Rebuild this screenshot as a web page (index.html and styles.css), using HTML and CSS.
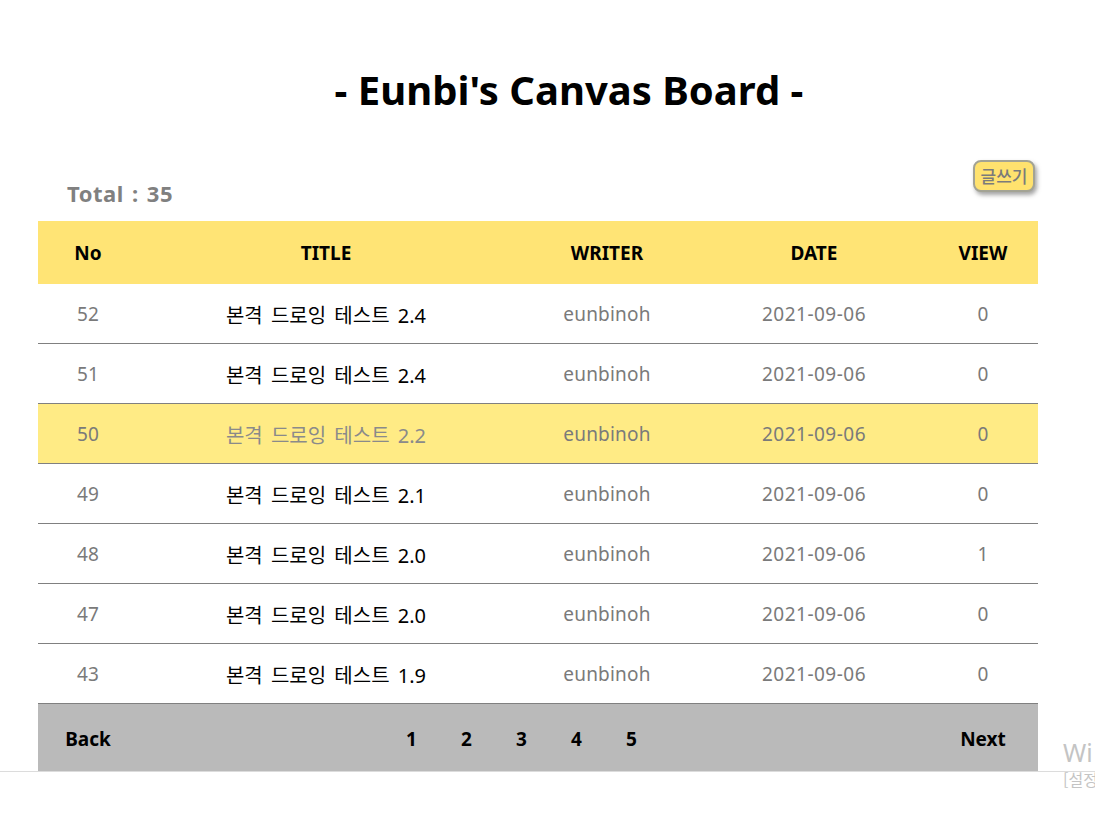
FILE: index.html
```html
<!DOCTYPE html>
<html lang="ko">
<head>
<meta charset="utf-8">
<title>Eunbi's Canvas Board</title>
<link rel="stylesheet" href="styles.css">
</head>
<body>
<div class="page">
  <h1 class="title">- Eunbi's Canvas Board -</h1>
  <div class="toolbar">
    <div class="total">Total : 35</div>
    <button class="write-btn">글쓰기</button>
  </div>
  <table class="board">
    <colgroup>
      <col class="c-no"><col class="c-title"><col class="c-writer"><col class="c-date"><col class="c-view">
    </colgroup>
    <thead>
      <tr><th>No</th><th>TITLE</th><th>WRITER</th><th>DATE</th><th>VIEW</th></tr>
    </thead>
    <tbody>
      <tr><td>52</td><td class="t">본격 드로잉 테스트 2.4</td><td>eunbinoh</td><td class="d">2021-09-06</td><td>0</td></tr>
      <tr><td>51</td><td class="t">본격 드로잉 테스트 2.4</td><td>eunbinoh</td><td class="d">2021-09-06</td><td>0</td></tr>
      <tr class="hover"><td>50</td><td class="t">본격 드로잉 테스트 2.2</td><td>eunbinoh</td><td class="d">2021-09-06</td><td>0</td></tr>
      <tr><td>49</td><td class="t">본격 드로잉 테스트 2.1</td><td>eunbinoh</td><td class="d">2021-09-06</td><td>0</td></tr>
      <tr><td>48</td><td class="t">본격 드로잉 테스트 2.0</td><td>eunbinoh</td><td class="d">2021-09-06</td><td>1</td></tr>
      <tr><td>47</td><td class="t">본격 드로잉 테스트 2.0</td><td>eunbinoh</td><td class="d">2021-09-06</td><td>0</td></tr>
      <tr class="last"><td>43</td><td class="t">본격 드로잉 테스트 1.9</td><td>eunbinoh</td><td class="d">2021-09-06</td><td>0</td></tr>
    </tbody>
  </table>
  <div class="pager">
    <span class="back">Back</span>
    <div class="pages"><span>1</span><span>2</span><span>3</span><span>4</span><span>5</span></div>
    <span class="next">Next</span>
  </div>
</div>
<div class="bottom-line"></div>
<div class="watermark"><div class="wm-big">Wi</div><div class="wm-small">[설정</div></div>
</body>
</html>
```
FILE: styles.css
```css
html, body {
  margin: 0;
  padding: 0;
  background: #ffffff;
}
body {
  font-family: "Noto Sans", "Noto Sans CJK KR", sans-serif;
  position: relative;
  min-height: 835px;
  overflow: hidden;
}
.page {
  width: 1000px;
  margin-left: 38px;
}
.title {
  margin: 0;
  padding: 62px 0 0 62px;
  height: 56px;
  text-align: center;
  font-size: 40px;
  line-height: 56px;
  font-weight: 700;
  color: #000;
}
.toolbar {
  display: flex;
  justify-content: space-between;
  align-items: flex-start;
  height: 103px;
  box-sizing: border-box;
  padding-top: 42px;
}
.total {
  margin: 18px 0 0 29px;
  font-size: 22px;
  line-height: 30px;
  font-weight: 700;
  color: #808080;
  letter-spacing: 0.5px;
  word-spacing: 2px;
}
.write-btn {
  margin-right: 3px;
  width: 62px;
  height: 32px;
  padding: 0;
  border: 2px solid #a3a394;
  border-radius: 8px;
  background: #ffe26e;
  color: #7b7b7b;
  font-family: "Noto Sans CJK KR", sans-serif;
  font-size: 17px;
  font-weight: 500;
  line-height: 26px;
  box-shadow: 2px 3px 4px rgba(90, 90, 90, 0.55);
}
.board {
  width: 1000px;
  border-collapse: collapse;
  table-layout: fixed;
}
.c-no { width: 100px; }
.c-title { width: 376px; }
.c-writer { width: 186px; }
.c-date { width: 228px; }
.c-view { width: 110px; }
.board th {
  height: 63px;
  padding: 0;
  background: #ffe475;
  font-size: 19px;
  font-weight: 700;
  color: #000;
  text-align: center;
}
.board td {
  height: 58px;
  padding: 1px 0 0;
  border-bottom: 1px solid #808080;
  font-size: 19px;
  color: #7a7a7a;
  text-align: center;
  letter-spacing: 0.2px;
}
.board td.d {
  letter-spacing: 0.5px;
}
.board td.t {
  color: #000;
  font-size: 20px;
  word-spacing: 3px;
  letter-spacing: 0;
}
.board tr.hover td {
  background: #ffeb85;
}
.board tr.hover td.t {
  color: #8a8a8a;
}
.board tr.last td {
  border-bottom: 0;
}
.pager {
  display: flex;
  align-items: center;
  padding-top: 3px;
  box-sizing: border-box;
  height: 68px;
  border-top: 1px solid #808080;
  background: #bababa;
  font-size: 19px;
  font-weight: 700;
  color: #000;
}
.back {
  width: 100px;
  text-align: center;
}
.pages {
  display: flex;
  margin-left: 246px;
}
.pages span {
  width: 55px;
  text-align: center;
}
.next {
  margin-left: auto;
  width: 110px;
  text-align: center;
}
.bottom-line {
  height: 1px;
  background: #dcdcdc;
}
.watermark {
  position: absolute;
  left: 1063px;
  top: 736px;
  color: #c4c4c4;
  white-space: nowrap;
}
.wm-big {
  font-size: 25px;
  line-height: 32px;
}
.wm-small {
  font-family: "Noto Sans CJK KR", sans-serif;
  font-size: 16px;
  line-height: 22px;
}
```
